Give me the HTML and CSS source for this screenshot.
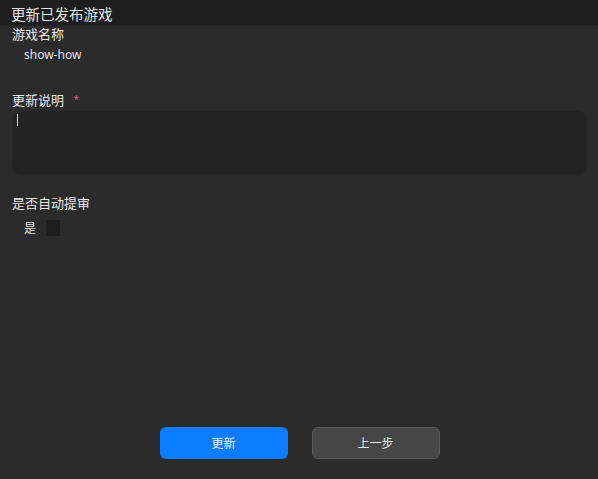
FILE: index.html
```html
<!DOCTYPE html>
<html lang="zh-CN">
<head>
  <meta charset="UTF-8" />
  <meta name="viewport" content="width=device-width, initial-scale=1" />
  <title>更新已发布游戏</title>
  <link rel="stylesheet" href="styles.css">
</head>
<body>
  <div class="dialog">
    <header class="title-bar">更新已发布游戏</header>
    <div class="form">
      <div class="field">
        <div class="label">游戏名称</div>
        <div class="value">show-how</div>
      </div>

      <div class="field notes">
        <div class="label">更新说明 <span class="required">*</span></div>
        <div class="textarea"><span class="caret"></span></div>
      </div>

      <div class="field review">
        <div class="label">是否自动提审</div>
        <label class="check-row">
          <span>是</span>
          <span class="checkbox"></span>
        </label>
      </div>
    </div>

    <div class="actions">
      <button class="btn btn-primary">更新</button>
      <button class="btn btn-secondary">上一步</button>
    </div>
  </div>
</body>
</html>
```

FILE: styles.css
```css
html, body {
  margin: 0;
  height: 100%;
}
body {
  background: #2b2b2b;
  color: #e2e2e2;
  font-family: "Noto Sans", "Noto Sans CJK SC", sans-serif;
}
.dialog {
  height: 479px;
  display: flex;
  flex-direction: column;
}
.title-bar {
  height: 25px;
  line-height: 29px;
  background: #1e1e1e;
  border-bottom: 1px solid #242424;
  padding-left: 11px;
  font-size: 14.5px;
  color: #e6e6e6;
}
.form {
  flex: 1;
  padding: 0 12px 0 12px;
}
.label {
  font-size: 13px;
  line-height: 16px;
  color: #e8e8e8;
}
.value {
  font-size: 12px;
  line-height: 16px;
  margin-top: 5px;
  padding-left: 12px;
  color: #e2e2e2;
}
.notes {
  margin-top: 28px;
}
.required {
  color: #d9567a;
  font-size: 10px;
  margin-left: 6px;
  vertical-align: 2px;
}
.textarea {
  margin-top: 3px;
  margin-left: 1px;
  height: 62px;
  background: #232323;
  border-radius: 8px;
  box-shadow: 0 1px 3px rgba(0, 0, 0, 0.25);
  padding: 2px 4px;
  box-sizing: border-box;
}
.caret {
  display: block;
  width: 1px;
  height: 12px;
  background: #d0d0d0;
  margin-top: 1px;
}
.review {
  margin-top: 22px;
}
.check-row {
  display: flex;
  align-items: center;
  gap: 10px;
  padding-left: 12px;
  margin-top: 8px;
  font-size: 12px;
  color: #e2e2e2;
}
.checkbox {
  width: 14px;
  height: 16px;
  background: #1e1e1e;
}
.actions {
  display: flex;
  justify-content: center;
  gap: 24px;
  padding-left: 1px;
  padding-bottom: 20px;
}
.btn {
  width: 128px;
  height: 32px;
  border-radius: 6px;
  font-family: inherit;
  font-size: 12px;
  color: #f0f0f0;
  cursor: pointer;
}
.btn-primary {
  background: #0a7cff;
  border: none;
}
.btn-secondary {
  background: #464646;
  border: 1px solid #585858;
  color: #e6e6e6;
}
```
